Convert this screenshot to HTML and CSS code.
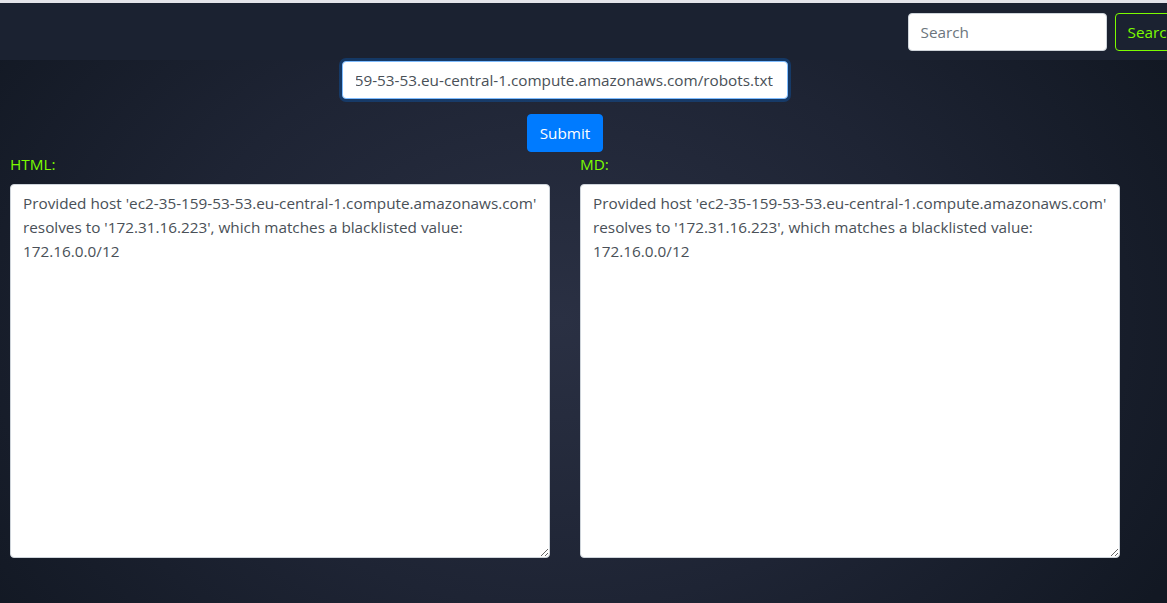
FILE: index.html
```html
<!DOCTYPE html>
<html lang="en">
<head>
<meta charset="utf-8">
<title>Fetcher</title>
<link rel="stylesheet" href="styles.css">
</head>
<body>
  <div class="topline"></div>
  <nav class="navbar">
    <form class="nav-search">
      <input class="search-input" type="search" placeholder="Search">
      <button class="search-btn" type="button">Search</button>
    </form>
  </nav>
  <main class="main">
    <form class="fetch-form">
      <input class="url-input is-focused" type="text" value="http://ec2-35-159-53-53.eu-central-1.compute.amazonaws.com/robots.txt">
      <button class="submit-btn" type="button">Submit</button>
    </form>
    <div class="panes">
      <div class="pane">
        <label class="pane-label">HTML:</label>
        <textarea class="pane-text">Provided host 'ec2-35-159-53-53.eu-central-1.compute.amazonaws.com' resolves to '172.31.16.223', which matches a blacklisted value: 172.16.0.0/12</textarea>
      </div>
      <div class="pane">
        <label class="pane-label">MD:</label>
        <textarea class="pane-text">Provided host 'ec2-35-159-53-53.eu-central-1.compute.amazonaws.com' resolves to '172.31.16.223', which matches a blacklisted value: 172.16.0.0/12</textarea>
      </div>
    </div>
  </main>
</body>
</html>
```
FILE: styles.css
```css
html, body {
  margin: 0;
  padding: 0;
}
body {
  min-height: 603px;
  overflow: hidden;
  font-family: "Open Sans", "Noto Sans", sans-serif;
  font-size: 15.3px;
  line-height: 24px;
  color: #212529;
  background: radial-gradient(ellipse 700px 520px at 560px 320px, #2a3043 0%, #1e2434 55%, #121823 100%);
  background-color: #121823;
}
.topline {
  height: 3px;
  background: #e4e4ea;
}
.navbar {
  display: flex;
  justify-content: flex-end;
  align-items: center;
  height: 57px;
  box-sizing: border-box;
  padding: 10px 16px 9px 16px;
  margin-right: -38px;
  background: #1b2231;
}
.nav-search {
  display: flex;
  gap: 8px;
  margin: 0;
}
.search-input {
  width: 199px;
  height: 38px;
  box-sizing: border-box;
  padding: 6px 12px;
  border: 1px solid #ced4da;
  border-radius: 4px;
  font-family: inherit;
  font-size: 15.3px;
  color: #495057;
  background: #fff;
  outline: none;
}
.search-input::placeholder {
  color: #6c757d;
}
.search-btn {
  height: 38px;
  box-sizing: border-box;
  padding: 6px 12px;
  border: 1px solid #7cfc00;
  border-radius: 4px;
  background: transparent;
  color: #7cfc00;
  font-family: inherit;
  font-size: 15.3px;
}
.main {
  width: 1130px;
  padding-left: 10px;
  box-sizing: border-box;
}
.fetch-form {
  display: flex;
  flex-direction: column;
  align-items: center;
  gap: 15px;
  margin: 1px 0 0 0;
}
.url-input {
  width: 446px;
  height: 38px;
  box-sizing: border-box;
  padding: 6px 14px 6px 13px;
  border: 1px solid #80bdff;
  border-radius: 4px;
  font-family: inherit;
  font-size: 15.3px;
  color: #495057;
  background: #fff;
  direction: rtl;
  outline: none;
  margin-left: -10px;
}
.url-input.is-focused {
  border-color: #80bdff;
  box-shadow: 0 0 0 3px rgba(0, 123, 255, 0.25);
}
.submit-btn {
  width: 76px;
  height: 38px;
  box-sizing: border-box;
  border: 1px solid #007bff;
  border-radius: 4px;
  background: #007bff;
  color: #fff;
  font-family: inherit;
  font-size: 15.3px;
  margin-left: -10px;
}
.panes {
  display: flex;
  gap: 30px;
}
.pane {
  display: flex;
  flex-direction: column;
  width: 540px;
}
.pane-label {
  color: #7cfc00;
  margin-bottom: 8px;
}
.pane-text {
  width: 540px;
  height: 374px;
  box-sizing: border-box;
  padding: 6px 12px;
  border: 1px solid #ced4da;
  border-radius: 4px;
  font-family: inherit;
  font-size: 15.3px;
  line-height: 24px;
  color: #495057;
  background: #fff;
  resize: vertical;
  margin: 0;
}
```
